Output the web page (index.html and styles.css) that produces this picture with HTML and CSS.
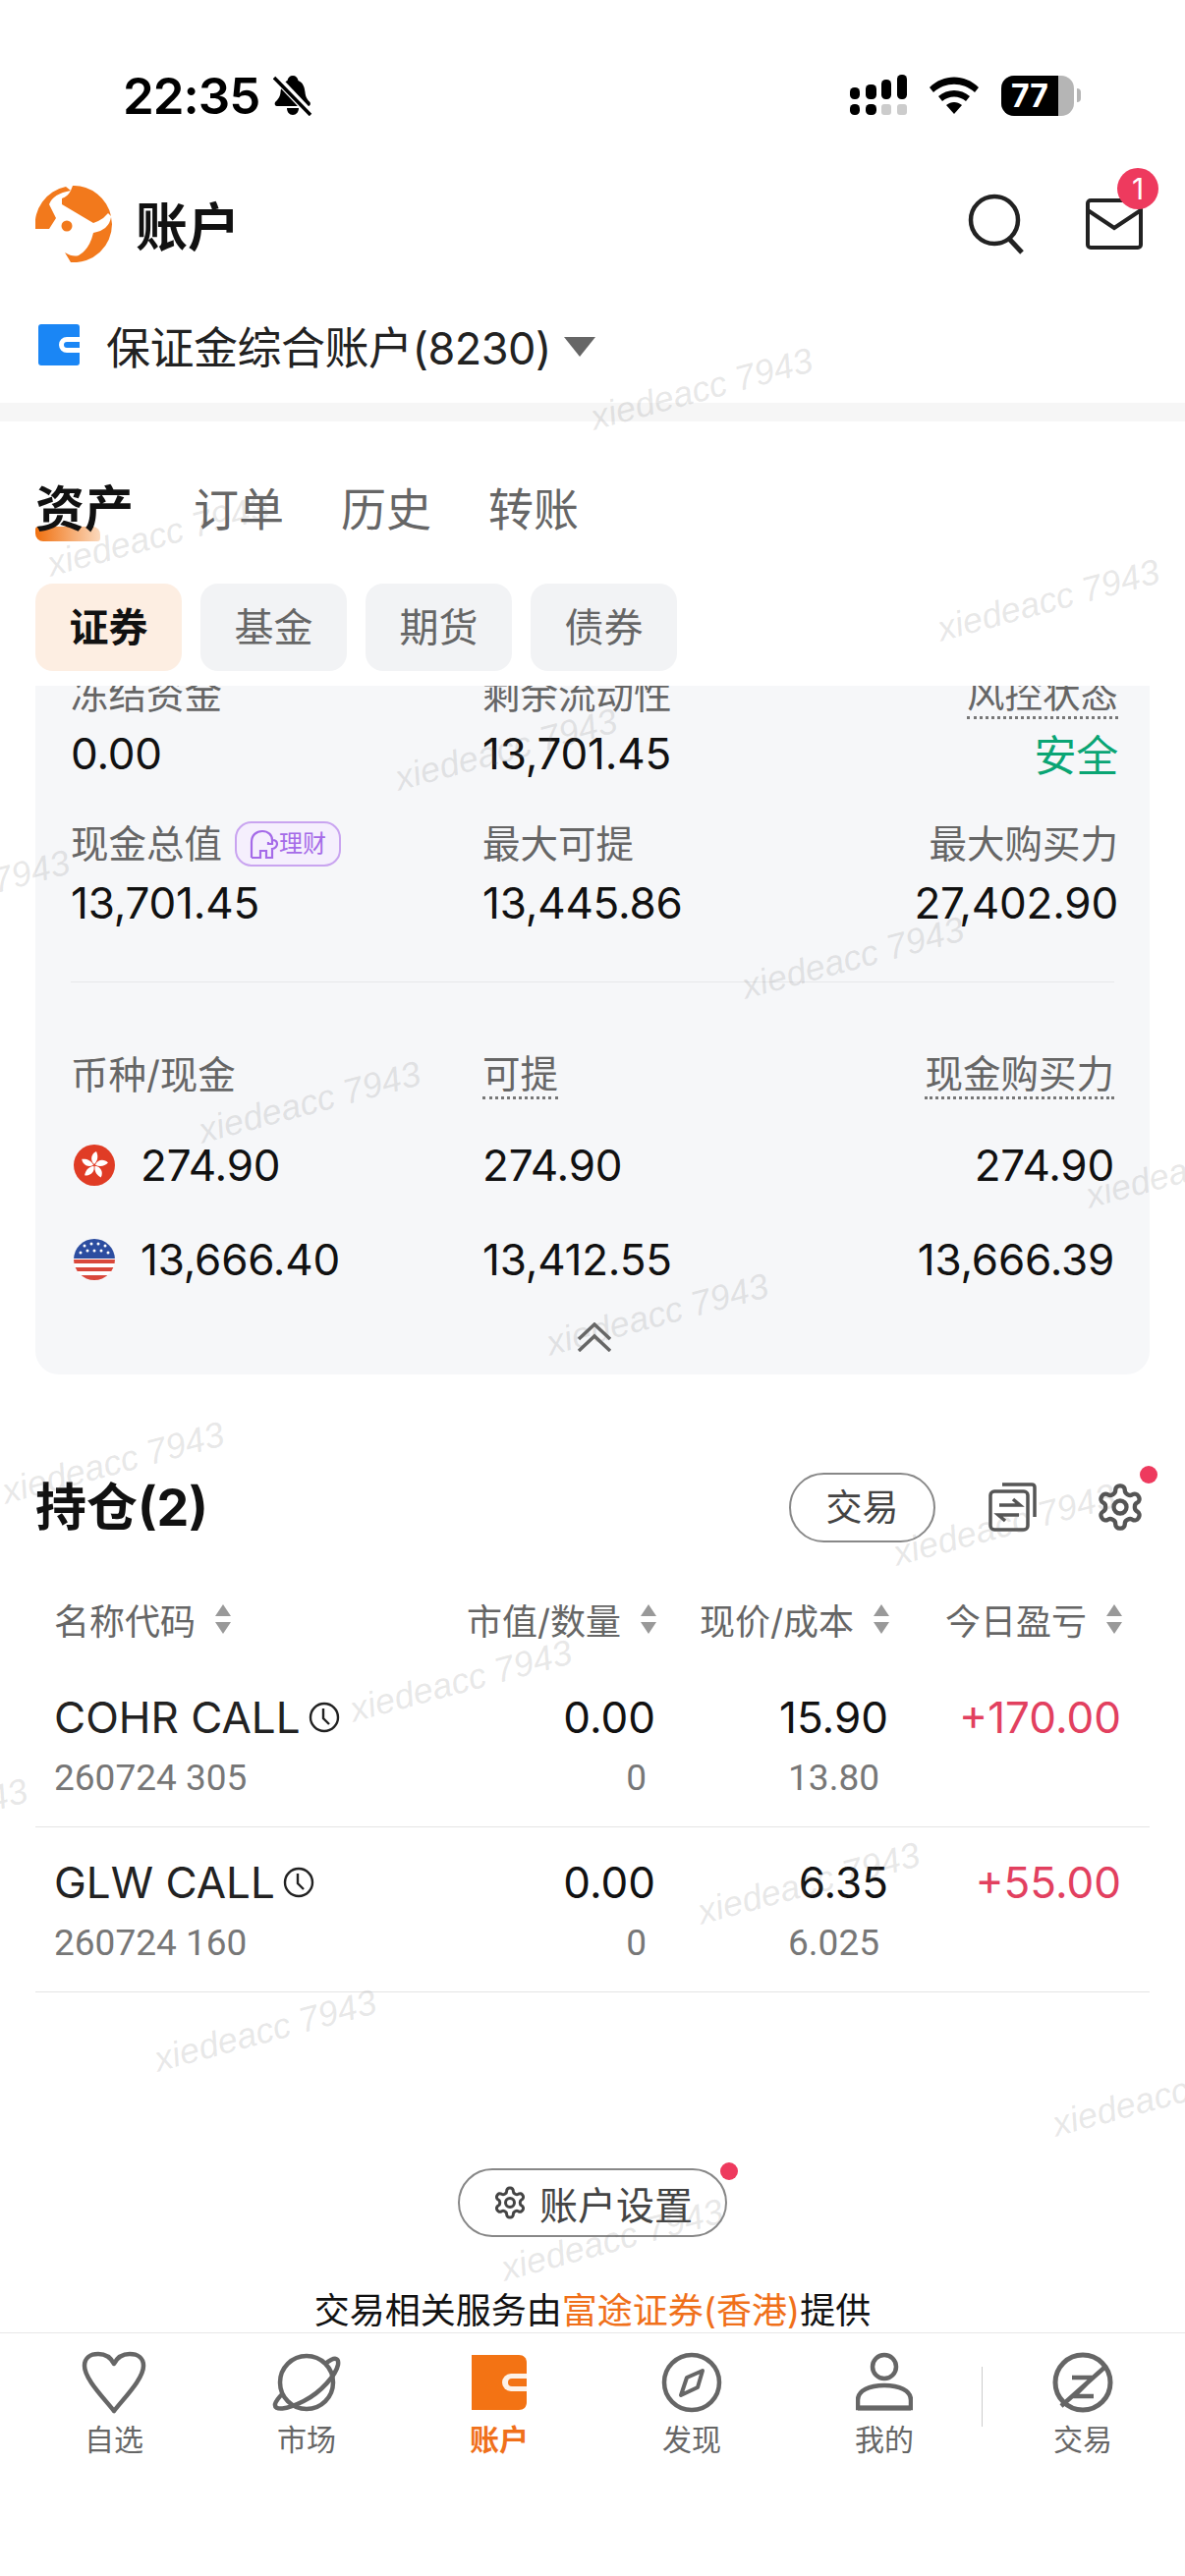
FILE: index.html
```html
<!DOCTYPE html>
<html lang="zh-CN">
<head>
    <meta charset="UTF-8">
    <meta name="viewport" content="width=device-width, initial-scale=1.0">
    <title>账户</title>
    <link rel="stylesheet" href="styles.css">
</head>
<body>
    <svg class="defs" width="0" height="0">
        <symbol id="cog" viewBox="0 0 24 24">
            <path d="M12.22 2h-.44a2 2 0 0 0-2 2v.18a2 2 0 0 1-1 1.73l-.43.25a2 2 0 0 1-2 0l-.15-.08a2 2 0 0 0-2.73.73l-.22.38a2 2 0 0 0 .73 2.73l.15.1a2 2 0 0 1 1 1.72v.51a2 2 0 0 1-1 1.74l-.15.09a2 2 0 0 0-.73 2.73l.22.38a2 2 0 0 0 2.73.73l.15-.08a2 2 0 0 1 2 0l.43.25a2 2 0 0 1 1 1.73V20a2 2 0 0 0 2 2h.44a2 2 0 0 0 2-2v-.18a2 2 0 0 1 1-1.73l.43-.25a2 2 0 0 1 2 0l.15.08a2 2 0 0 0 2.73-.73l.22-.39a2 2 0 0 0-.73-2.73l-.15-.08a2 2 0 0 1-1-1.74v-.5a2 2 0 0 1 1-1.74l.15-.09a2 2 0 0 0 .73-2.73l-.22-.38a2 2 0 0 0-2.73-.73l-.15.08a2 2 0 0 1-2 0l-.43-.25a2 2 0 0 1-1-1.73V4a2 2 0 0 0-2-2z" fill="none" stroke="currentColor" stroke-width="2"/>
            <circle cx="12" cy="12" r="3" fill="none" stroke="currentColor" stroke-width="2"/>
        </symbol>
        <symbol id="sort" viewBox="0 0 18 30">
            <path d="M9 0l8 12H1zM9 30L1 18h16z" fill="#999"/>
        </symbol>
        <symbol id="clock" viewBox="0 0 32 32">
            <circle cx="16" cy="16" r="14" fill="none" stroke="#222" stroke-width="2.4"/>
            <path d="M15 7v10l6 6" fill="none" stroke="#222" stroke-width="2.4"/>
        </symbol>
    </svg>

    <div class="status">
        <span class="time">22:35</span>
        <svg class="bell" width="40" height="42" viewBox="0 0 40 42">
            <path d="M20 1c3 0 5 2 5.500 5 5 2 6.500 7 7 12 .5 5 2 7 5 10 1 2 0 4-2 4H4c-2 0-3-2-2-4 3-3 5-5 5.500-10 .5-5 2-10 7-12C15 3 17 1 20 1zM14 34h12c0 4-2.500 7-6 7s-6-3-6-7z"/>
            <path d="M2 2l36 38" stroke="#fff" stroke-width="8"/>
            <path d="M1 3l37 38" stroke="#000" stroke-width="3.500"/>
        </svg>
        <div class="status-right">
            <svg width="60" height="42" viewBox="0 0 60 42">
                <rect x="1" y="13" width="10" height="12" rx="4.500"/>
                <rect x="17" y="10" width="11" height="15" rx="4.500"/>
                <rect x="33" y="5" width="10" height="20" rx="4.500"/>
                <rect x="49" y="0" width="10" height="25" rx="4.500"/>
                <rect x="1" y="30" width="10" height="11" rx="4.500"/>
                <rect x="17" y="30" width="11" height="11" rx="4.500"/>
                <rect x="33" y="30" width="10" height="11" rx="3" fill="#ccc"/>
                <rect x="49" y="30" width="10" height="11" rx="3" fill="#ccc"/>
            </svg>
            <svg class="wifi" width="50" height="38" viewBox="0 0 50 38">
                <path d="M0 11C14-3 36-3 50 11l-4 5C34 5 16 5 4 16z"/>
                <path d="M9 20c9-8 23-8 32 0l-4 5c-7-6-17-6-24 0z"/>
                <path d="M17 29c5-4 11-4 16 0l-8 9z"/>
            </svg>
            <div class="battery">
                <div class="battery-body"><span class="battery-fill">77</span></div>
                <div class="battery-tip"></div>
            </div>
        </div>
    </div>

    <div class="header">
        <svg class="logo" width="78" height="78" viewBox="0 0 78 78">
            <path d="M0 44A39 39 0 0 1 31 1l5 4Q18 8 14 19l7 14-7 11z"/>
            <path d="M27 13Q33 11 36 5L38 0A39 39 0 0 1 77 31Q76 30 74 28Q70 33 64 36L59 38L27 19z"/>
            <path d="M78 39A39 39 0 0 1 36 78L30 68Q38 73 44 71Q55 65 59 48Q75 45 77 32z"/>
            <circle cx="32" cy="41" r="5.500"/>
        </svg>
        <h1 class="page-title">账户</h1>
        <div class="header-actions">
            <svg width="60" height="62" viewBox="0 0 60 62">
                <circle cx="27" cy="27" r="24" fill="none" stroke="#222" stroke-width="4.500"/>
                <path d="M42 46l13 14" stroke="#222" stroke-width="5" fill="none"/>
            </svg>
            <div class="mail">
                <svg width="58" height="52" viewBox="0 0 58 52">
                    <rect x="2" y="2" width="54" height="48" rx="3" fill="none" stroke="#222" stroke-width="4"/>
                    <path d="M2 12l27 18 27-18" fill="none" stroke="#222" stroke-width="4"/>
                </svg>
                <span class="mail-badge">1</span>
            </div>
        </div>
    </div>

    <div class="account-row">
        <svg width="42" height="42" viewBox="0 0 42 42">
            <rect width="42" height="42" rx="3" fill="#1a86f5"/>
            <path d="M42 13H29a8 8 0 0 0 0 16h13v-5H29a3 3 0 0 1 0-6h13z" fill="#fff"/>
        </svg>
        <span class="account-name">保证金综合账户(8230)</span>
        <span class="caret"></span>
    </div>
    <div class="strip"></div>

    <div class="tabs">
        <span class="tab tab-on">资产</span>
        <span class="tab">订单</span>
        <span class="tab">历史</span>
        <span class="tab">转账</span>
    </div>
    <div class="chips">
        <span class="chip chip-on">证券</span>
        <span class="chip">基金</span>
        <span class="chip">期货</span>
        <span class="chip">债券</span>
    </div>

    <div class="scroller">
        <div class="card">
            <div class="stat-grid">
                <div class="stat">
                    <div class="stat-label">冻结资金</div>
                    <div class="stat-value">0.00</div>
                </div>
                <div class="stat">
                    <div class="stat-label">剩余流动性</div>
                    <div class="stat-value">13,701.45</div>
                </div>
                <div class="stat stat-end">
                    <div class="stat-label"><span class="dotted">风控状态</span></div>
                    <div class="stat-value safe">安全</div>
                </div>
                <div class="stat">
                    <div class="stat-label">现金总值
                        <span class="licai">
                            <svg width="30" height="30" viewBox="0 0 30 30">
                                <path d="M2 29V13C2 6 7 2 13 2s10 4 10 9v4h-4v-2M23 11c4 0 5 2 5 4s-2 5-5 5v9h-6v-7h-6v7H2" fill="none" stroke="#a56be8" stroke-width="2.200"/>
                            </svg>理财
                        </span>
                    </div>
                    <div class="stat-value">13,701.45</div>
                </div>
                <div class="stat">
                    <div class="stat-label">最大可提</div>
                    <div class="stat-value">13,445.86</div>
                </div>
                <div class="stat stat-end">
                    <div class="stat-label">最大购买力</div>
                    <div class="stat-value">27,402.90</div>
                </div>
            </div>
            <div class="card-line"></div>
            <div class="cash-grid">
                <div class="cash-head">币种/现金</div>
                <div class="cash-head"><span class="dotted">可提</span></div>
                <div class="cash-head cell-end"><span class="dotted">现金购买力</span></div>

                <div class="cash-cell">
                    <svg class="flag" width="42" height="42" viewBox="0 0 42 42">
                        <circle cx="21" cy="21" r="21" fill="#e03c25"/>
                        <g fill="#fff">
                            <path d="M21 20C16 16 18 9 23 7c2 4 2 9-2 13z"/>
                            <path d="M21 20C16 16 18 9 23 7c2 4 2 9-2 13z" transform="rotate(72 21 21)"/>
                            <path d="M21 20C16 16 18 9 23 7c2 4 2 9-2 13z" transform="rotate(144 21 21)"/>
                            <path d="M21 20C16 16 18 9 23 7c2 4 2 9-2 13z" transform="rotate(216 21 21)"/>
                            <path d="M21 20C16 16 18 9 23 7c2 4 2 9-2 13z" transform="rotate(288 21 21)"/>
                        </g>
                    </svg>274.90
                </div>
                <div class="cash-cell">274.90</div>
                <div class="cash-cell cell-end">274.90</div>

                <div class="cash-cell">
                    <svg class="flag" width="42" height="42" viewBox="0 0 42 42">
                        <clipPath id="us-clip"><circle cx="21" cy="21" r="21"/></clipPath>
                        <g clip-path="url(#us-clip)">
                            <rect width="42" height="42" fill="#fff"/>
                            <path d="M0 21h42v4H0zM0 29h42v4H0zM0 37h42v5H0z" fill="#d9483b"/>
                            <rect width="42" height="20" fill="#2c4da0"/>
                            <g fill="#fff">
                                <circle cx="11" cy="7" r="1.500"/><circle cx="18" cy="5" r="1.500"/><circle cx="25" cy="5" r="1.500"/><circle cx="32" cy="7" r="1.500"/>
                                <circle cx="7" cy="14" r="1.500"/><circle cx="14" cy="12" r="1.500"/><circle cx="21" cy="12" r="1.500"/><circle cx="28" cy="12" r="1.500"/><circle cx="35" cy="14" r="1.500"/>
                            </g>
                        </g>
                    </svg>13,666.40
                </div>
                <div class="cash-cell">13,412.55</div>
                <div class="cash-cell cell-end">13,666.39</div>
            </div>
            <svg class="collapse" width="36" height="30" viewBox="0 0 36 30">
                <path d="M2 17L18 2l16 15M2 29l16-15 16 15" fill="none" stroke="#666" stroke-width="3.500"/>
            </svg>
        </div>

        <div class="hold-head">
            <h2 class="hold-title">持仓(2)</h2>
            <span class="pill">交易</span>
            <svg class="swap" width="50" height="50" viewBox="0 0 50 50">
                <path d="M14 2h30c2 0 3 1 3 3v30" fill="none" stroke="#555" stroke-width="3.500"/>
                <rect x="2" y="9" width="38" height="39" rx="4" fill="none" stroke="#555" stroke-width="3.500"/>
                <path d="M11 23h21l-7-6M31 33H10l7 6" fill="none" stroke="#555" stroke-width="3.500"/>
            </svg>
            <div class="gear">
                <svg width="52" height="52"><use href="#cog"/></svg>
                <span class="dot"></span>
            </div>
        </div>

        <div class="table">
            <div class="table-row table-top">
                <div class="th th-start">名称代码<svg width="18" height="30"><use href="#sort"/></svg></div>
                <div class="th">市值/数量<svg width="18" height="30"><use href="#sort"/></svg></div>
                <div class="th">现价/成本<svg width="18" height="30"><use href="#sort"/></svg></div>
                <div class="th">今日盈亏<svg width="18" height="30"><use href="#sort"/></svg></div>
            </div>
            <div class="table-row position">
                <div class="name">COHR CALL<svg width="32" height="32"><use href="#clock"/></svg></div>
                <div class="num">0.00</div>
                <div class="num">15.90</div>
                <div class="num up">+170.00</div>
                <div class="code">260724 305</div>
                <div class="sub">0</div>
                <div class="sub">13.80</div>
                <div></div>
            </div>
            <div class="table-row position">
                <div class="name">GLW CALL<svg width="32" height="32"><use href="#clock"/></svg></div>
                <div class="num">0.00</div>
                <div class="num">6.35</div>
                <div class="num up">+55.00</div>
                <div class="code">260724 160</div>
                <div class="sub">0</div>
                <div class="sub">6.025</div>
                <div></div>
            </div>
        </div>

        <div class="settings-wrap">
            <div class="settings">
                <svg width="36" height="36"><use href="#cog"/></svg>
                账户设置
                <span class="dot settings-dot"></span>
            </div>
        </div>
        <p class="broker">交易相关服务由<span class="broker-name">富途证券(香港)</span>提供</p>
    </div>

    <div class="tabbar">
        <div class="nav-item">
            <svg width="68" height="64" viewBox="0 0 68 64">
                <path d="M34 61C22 46 4 28 4 15 4 7 10 3 18 3c7 0 13 4 16 10 3-6 9-10 16-10 8 0 14 4 14 12 0 13-18 31-30 46z" fill="none" stroke="#666" stroke-width="4.500" stroke-linejoin="round"/>
            </svg>
            <span>自选</span>
        </div>
        <div class="nav-item">
            <svg width="70" height="64" viewBox="0 0 70 64">
                <circle cx="35" cy="32" r="27" fill="none" stroke="#666" stroke-width="4.500"/>
                <path d="M54 13C64 5 68 7 67 14 65 24 50 42 32 51 14 60 2 61 3 54 4 50 7 47 11 43" fill="none" stroke="#666" stroke-width="4.500"/>
            </svg>
            <span>市场</span>
        </div>
        <div class="nav-item nav-on">
            <svg width="56" height="64" viewBox="0 0 56 64">
                <path d="M0 4h48c5 0 8 3 8 8v40c0 5-3 8-8 8H0z" fill="#f37314"/>
                <path d="M56 23H40a9 9 0 0 0 0 18h16" fill="#fdf2e8"/>
                <path d="M56 28H41a4 4 0 0 0 0 8h15z" fill="#f37314"/>
            </svg>
            <span>账户</span>
        </div>
        <div class="nav-item">
            <svg width="62" height="64" viewBox="0 0 62 64">
                <circle cx="31" cy="32" r="28" fill="none" stroke="#666" stroke-width="4.500"/>
                <path d="M42 20l-5 17-17 8 6-18z" fill="none" stroke="#666" stroke-width="4" stroke-linejoin="round"/>
            </svg>
            <span>发现</span>
        </div>
        <div class="nav-item">
            <svg width="58" height="64" viewBox="0 0 58 64">
                <circle cx="29" cy="16" r="12" fill="none" stroke="#666" stroke-width="4.500"/>
                <path d="M2 58V50C2 40 14 35 29 35s27 5 27 15v8z" fill="none" stroke="#666" stroke-width="4.500"/>
                <path d="M2 58h54" stroke="#666" stroke-width="5"/>
            </svg>
            <span>我的</span>
        </div>
        <div class="nav-sep"></div>
        <div class="nav-item">
            <svg width="62" height="64" viewBox="0 0 62 64">
                <circle cx="31" cy="32" r="28" fill="none" stroke="#666" stroke-width="5"/>
                <path d="M20 27h21L22 46h20M9 56L55 15" fill="none" stroke="#666" stroke-width="4.500"/>
            </svg>
            <span>交易</span>
        </div>
    </div>

    <div class="marks">
        <span class="mark m1">xiedeacc 7943</span>
        <span class="mark m2">xiedeacc 7943</span>
        <span class="mark m3">xiedeacc 7943</span>
        <span class="mark m4">xiedeacc 7943</span>
        <span class="mark m5">xiedeacc 7943</span>
        <span class="mark m6">xiedeacc 7943</span>
        <span class="mark m7">xiedeacc 7943</span>
        <span class="mark m8">xiedeacc 7943</span>
        <span class="mark m9">xiedeacc 7943</span>
        <span class="mark m10">xiedeacc 7943</span>
        <span class="mark m11">xiedeacc 7943</span>
        <span class="mark m12">xiedeacc 7943</span>
        <span class="mark m13">xiedeacc 7943</span>
        <span class="mark m14">xiedeacc 7943</span>
        <span class="mark m15">xiedeacc 7943</span>
        <span class="mark m16">xiedeacc 7943</span>
        <span class="mark m17">xiedeacc 7943</span>
    </div>
</body>
</html>
```

FILE: styles.css
```css
* {
    box-sizing: border-box;
}

body {
    font-family: Inter, "Noto Sans CJK SC", sans-serif;
    background-color: #fff;
    color: #111;
    margin: 0;
    width: 1206px;
    height: 2622px;
    overflow: hidden;
    position: relative;
}

.defs {
    position: absolute;
}

/* status bar */
.status {
    height: 150px;
    padding: 44px 0 0 125px;
    display: flex;
    align-items: center;
}

.time {
    font-size: 51px;
    font-weight: 600;
    letter-spacing: -1px;
    color: #000;
}

.bell {
    margin-left: 14px;
}

.status-right {
    margin-left: auto;
    margin-right: 106px;
    display: flex;
    align-items: center;
}

.wifi {
    margin-left: 22px;
}

.battery {
    margin-left: 23px;
    display: flex;
    align-items: center;
}

.battery-body {
    width: 74px;
    height: 41px;
    border-radius: 13px;
    background-color: #b5b5b5;
    overflow: hidden;
}

.battery-fill {
    display: block;
    width: 58px;
    height: 41px;
    line-height: 41px;
    background-color: #000;
    color: #fff;
    font-size: 32px;
    font-weight: 700;
    text-align: center;
}

.battery-tip {
    width: 4px;
    height: 14px;
    margin-left: 3px;
    background-color: #b5b5b5;
    border-radius: 0 4px 4px 0;
}

/* header */
.header {
    height: 156px;
    padding: 0 43px 0 36px;
    display: flex;
    align-items: center;
}

.logo {
    fill: #f2791c;
}

.page-title {
    font-size: 53px;
    font-weight: 700;
    margin: 0 0 0 24px;
}

.header-actions {
    margin-left: auto;
    display: flex;
    align-items: center;
    gap: 60px;
}

.mail {
    position: relative;
    height: 52px;
}

.mail-badge {
    position: absolute;
    right: -16px;
    top: -31px;
    width: 42px;
    height: 42px;
    border-radius: 50%;
    background-color: #ee3a5e;
    color: #fff;
    font-size: 30px;
    line-height: 42px;
    text-align: center;
}

.account-row {
    height: 104px;
    padding: 0 0 14px 39px;
    display: flex;
    align-items: center;
}

.account-name {
    font-size: 45px;
    margin-left: 27px;
    color: #222;
    letter-spacing: -.5px;
}

.caret {
    width: 0;
    height: 0;
    margin-left: 13px;
    margin-top: 4px;
    border-left: 16px solid transparent;
    border-right: 16px solid transparent;
    border-top: 20px solid #666;
}

.strip {
    height: 19px;
    background-color: #f6f6f6;
}

/* tabs */
.tabs {
    height: 70px;
    margin: 54px 0 41px;
    padding-left: 36px;
    display: flex;
    align-items: center;
    gap: 58px;
}

.tab {
    font-size: 46px;
    color: #666;
    line-height: 70px;
    position: relative;
}

.tab-on {
    font-size: 50px;
    color: #111;
    font-weight: 700;
    margin-right: 3px;
}

.tab-on::after {
    content: "";
    position: absolute;
    left: 0;
    top: 53px;
    width: 66px;
    height: 15px;
    border-radius: 3px 8px 3px 8px;
    background: linear-gradient(90deg, #f0700f, #fbd9bd);
    z-index: -1;
}

.chips {
    height: 89px;
    margin-bottom: 15px;
    padding-left: 36px;
    display: flex;
    gap: 19px;
}

.chip {
    width: 149px;
    border-radius: 18px;
    background-color: #f2f3f5;
    color: #666;
    font-size: 40px;
    line-height: 89px;
    text-align: center;
}

.chip-on {
    background-color: #fdeee2;
    color: #111;
    font-weight: 700;
}

/* scrolled content */
.scroller {
    height: 1676px;
    overflow: hidden;
}

.card {
    margin: -19px 36px 0;
    padding: 0 32px 23px 36px;
    background-color: #f6f7f9;
    border-radius: 0 0 24px 24px;
}

.stat-grid {
    display: grid;
    grid-template-columns: 419px 1fr auto;
    row-gap: 36px;
}

.stat-label {
    height: 56px;
    line-height: 56px;
    font-size: 38.500px;
    color: #666;
    white-space: nowrap;
    display: flex;
    align-items: center;
}

.stat-value {
    height: 56px;
    line-height: 56px;
    margin-top: 4px;
    font-size: 44px;
    letter-spacing: -.2px;
    color: #111;
}

.stat-end {
    text-align: right;
}

.stat-end .stat-label {
    justify-content: flex-end;
}

.safe {
    font-size: 43px;
    color: #0aa574;
    padding-top: 2px;
}

.dotted {
    display: inline-block;
    line-height: 46px;
    border-bottom: 3px dotted #777;
}

.licai {
    margin-left: 13px;
    height: 46px;
    width: 108px;
    border: 2px solid #c9a4f0;
    border-radius: 17px;
    background-color: #f5effd;
    color: #a56be8;
    font-size: 24px;
    display: flex;
    align-items: center;
    justify-content: center;
}

.card-line {
    height: 1px;
    margin: 52px 4px 66px 0;
    background-color: #e6e7e9;
}

.cash-grid {
    display: grid;
    grid-template-columns: 419px 1fr auto;
    margin-right: 4px;
}

.cash-head {
    height: 56px;
    margin-bottom: 16px;
    line-height: 56px;
    font-size: 38.500px;
    color: #666;
    display: flex;
    align-items: center;
}

.cash-cell {
    height: 96px;
    font-size: 44px;
    letter-spacing: -.2px;
    display: flex;
    align-items: center;
}

.cell-end {
    justify-content: flex-end;
}

.flag {
    margin: 0 26px 0 3px;
}

.collapse {
    display: block;
    margin: 16px auto 0;
}

/* positions */
.hold-head {
    height: 90px;
    margin: 90px 36px 0;
    display: flex;
    align-items: center;
}

.hold-title {
    font-size: 52px;
    font-weight: 700;
    margin: 0 0 8px;
}

.pill {
    margin-left: auto;
    width: 149px;
    height: 71px;
    border: 2px solid #888;
    border-radius: 36px;
    color: #444;
    font-size: 37px;
    line-height: 67px;
    text-align: center;
}

.swap {
    margin-left: 54px;
    color: #555;
}

.gear {
    position: relative;
    margin-left: 58px;
    margin-right: 4px;
    height: 52px;
    color: #555;
}

.dot {
    position: absolute;
    width: 18px;
    height: 18px;
    border-radius: 50%;
    background-color: #ee3a5e;
}

.gear .dot {
    right: -12px;
    top: -16px;
}

.table {
    margin: 39px 36px 0;
}

.table-row {
    display: grid;
    grid-template-columns: 377px 237px 237px 237px;
    padding: 0 26px 0 19px;
}

.table-top {
    height: 60px;
    margin-bottom: 14px;
}

.th {
    display: flex;
    align-items: center;
    justify-content: flex-end;
    gap: 19px;
    font-size: 36px;
    color: #666;
    white-space: nowrap;
}

.th-start {
    justify-content: flex-start;
}

.position {
    padding-top: 28px;
    padding-bottom: 21px;
    row-gap: 6px;
    border-bottom: 1px solid #e5e5e5;
}

.name {
    height: 56px;
    display: flex;
    align-items: center;
    gap: 8px;
    font-size: 44px;
    color: #222;
}

.num {
    height: 56px;
    line-height: 56px;
    padding-right: 2px;
    font-size: 44px;
    text-align: right;
    color: #111;
}

.up {
    color: #e2405f;
}

.code,
.sub {
    height: 56px;
    line-height: 56px;
    font-family: Roboto, sans-serif;
    font-size: 37px;
    color: #777;
}

.sub {
    text-align: right;
    padding-right: 11px;
}

.settings-wrap {
    margin-top: 179px;
    display: flex;
    justify-content: center;
}

.settings {
    position: relative;
    width: 274px;
    height: 70px;
    border: 2px solid #888;
    border-radius: 35px;
    font-size: 39px;
    color: #444;
    display: flex;
    align-items: center;
    justify-content: center;
    gap: 12px;
}

.settings-dot {
    right: -13px;
    top: -8px;
}

.broker {
    margin: 52px 0 0;
    line-height: 46px;
    font-size: 36px;
    text-align: center;
    color: #111;
}

.broker-name {
    color: #f0701a;
}

/* bottom nav */
.tabbar {
    height: 249px;
    padding-left: 18px;
    border-top: 1px solid #e8e8e8;
    display: flex;
}

.nav-item {
    width: 196px;
    padding-top: 18px;
    display: flex;
    flex-direction: column;
    align-items: center;
    gap: 6px;
    font-size: 30px;
    line-height: 40px;
    color: #666;
}

.nav-on {
    color: #f0701a;
    font-weight: 700;
}

.nav-sep {
    width: 1px;
    height: 61px;
    margin: 34px 4px 0 1px;
    background-color: #ccc;
}

/* watermark */
.marks {
    position: absolute;
    left: 0;
    top: 0;
    width: 1206px;
    height: 2622px;
    overflow: hidden;
    pointer-events: none;
}

.mark {
    position: absolute;
    width: 240px;
    height: 44px;
    line-height: 44px;
    text-align: center;
    white-space: nowrap;
    font-family: "Liberation Sans", sans-serif;
    font-style: italic;
    font-size: 36px;
    color: rgba(110, 110, 110, .17);
    transform: rotate(-15deg);
}

.m1 { left: 594px; top: 374px; }
.m2 { left: 41px; top: 523px; }
.m3 { left: 947px; top: 589px; }
.m4 { left: 395px; top: 741px; }
.m5 { left: -162px; top: 885px; }
.m6 { left: 748px; top: 953px; }
.m7 { left: 195px; top: 1100px; }
.m8 { left: 1098px; top: 1166px; }
.m9 { left: 549px; top: 1316px; }
.m10 { left: -5px; top: 1467px; }
.m11 { left: 902px; top: 1530px; }
.m12 { left: 349px; top: 1689px; }
.m13 { left: -205px; top: 1830px; }
.m14 { left: 703px; top: 1895px; }
.m15 { left: 150px; top: 2045px; }
.m16 { left: 1064px; top: 2111px; }
.m17 { left: 503px; top: 2258px; }
```
